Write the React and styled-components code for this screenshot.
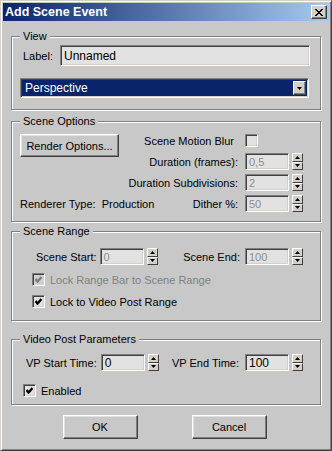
import React from 'react';
import styled, { createGlobalStyle } from 'styled-components';

const GlobalStyle = createGlobalStyle`
  * { box-sizing: border-box; }
  body {
    margin: 0;
    background: #c8c8c8;
    font-family: "Liberation Sans", Arial, sans-serif;
    font-size: 11px;
    color: #000;
  }
`;

const Window = styled.div`
  width: 332px;
  height: 451px;
  background: #c8c8c8;
  border: 1px solid;
  border-color: #d4d0c8 #404040 #404040 #d4d0c8;
  box-shadow: inset 1px 1px #fff, inset -1px -1px #808080;
  padding: 2px;
  display: flex;
  flex-direction: column;
`;

const TitleBar = styled.div`
  height: 18px;
  background: linear-gradient(to right, #0a246a, #a6caf0);
  display: flex;
  align-items: center;
  justify-content: space-between;
  padding: 0 2px 0 2px;
  color: #fff;
  font-weight: bold;
  font-size: 12.5px;
`;

const CloseBtn = styled.div`
  width: 16px;
  height: 14px;
  background: #d4d0c8;
  border: 1px solid;
  border-color: #fff #404040 #404040 #fff;
  box-shadow: inset -1px -1px #808080;
  display: flex;
  align-items: center;
  justify-content: center;
`;

const Body = styled.div`
  padding: 0 8px;
  display: flex;
  flex-direction: column;
`;

const Group = styled.div`
  position: relative;
  margin-top: ${p => p.$top}px;
  height: ${p => p.$h}px;
  border: 1px solid #808080;
  box-shadow: inset 1px 1px #fff, 1px 1px #fff;
  padding: ${p => p.$pad};
  display: flex;
  flex-direction: column;
`;

const Legend = styled.span`
  position: absolute;
  top: -7px;
  left: 8px;
  padding: 0 3px;
  background: #c8c8c8;
  line-height: 13px;
`;

const Row = styled.div`
  display: flex;
  align-items: center;
  justify-content: ${p => p.$justify || 'flex-start'};
  margin-top: ${p => p.$mt || 0}px;
  margin-left: ${p => p.$ml || 0}px;
  gap: ${p => p.$gap || 0}px;
  color: ${p => (p.$disabled ? '#808080' : '#000')};
`;

const Edit = styled.div`
  height: ${p => p.$h || 17}px;
  width: ${p => (p.$w ? p.$w + 'px' : 'auto')};
  flex: ${p => (p.$w ? 'none' : '1')};
  background: #e2e2e2;
  border: 1px solid;
  border-color: #808080 #fff #fff #808080;
  box-shadow: inset 1px 1px #404040, inset -1px -1px #d4d0c8;
  padding: 0 3px;
  display: flex;
  align-items: center;
  color: ${p => (p.$disabled ? '#8c8c8c' : '#000')};
  font-size: ${p => p.$fs || 11}px;
`;

const Combo = styled.div`
  margin: 12px 0 0 -3px;
  width: 289px;
  height: 20px;
  border: 1px solid;
  border-color: #808080 #fff #fff #808080;
  box-shadow: inset 1px 1px #404040, inset -1px -1px #d4d0c8;
  padding: 2px;
  display: flex;
  background: #0a246a;
`;

const ComboText = styled.div`
  flex: 1;
  color: #fff;
  font-size: 12px;
  display: flex;
  align-items: center;
  padding-left: 2px;
`;

const ArrowBtn = styled.div`
  width: 13px;
  height: 14px;
  background: #d4d0c8;
  border: 1px solid;
  border-color: #fff #404040 #404040 #fff;
  box-shadow: inset -1px -1px #808080;
  display: flex;
  align-items: center;
  justify-content: center;
`;

const Button = styled.div`
  width: ${p => p.$w}px;
  height: ${p => p.$h}px;
  background: #c8c8c8;
  border: 1px solid;
  border-color: #fff #404040 #404040 #fff;
  box-shadow: inset -1px -1px #808080, inset 1px 1px #e0e0e0;
  display: flex;
  align-items: center;
  justify-content: center;
  font-size: 11px;
`;

const OptionsGrid = styled.div`
  display: grid;
  grid-template-columns: minmax(0, 1fr) auto 58px;
  grid-template-rows: repeat(4, 17px);
  row-gap: 4px;
  column-gap: 7px;
  align-items: center;
`;

const GridLabel = styled.div`
  grid-column: 2;
  grid-row: ${p => p.$row};
  margin-right: ${p => p.$mr || 0}px;
  text-align: right;
  white-space: nowrap;
`;

const GridControl = styled.div`
  grid-column: 3;
  grid-row: ${p => p.$row};
  display: flex;
  align-items: center;
  gap: 3px;
`;

const RenderBtnCell = styled.div`
  grid-column: 1;
  grid-row: 1 / span 2;
  align-self: start;
  margin-top: 2px;
`;

const RendererCell = styled.div`
  grid-column: 1;
  grid-row: 4;
  white-space: pre;
`;

const Label = styled.span`
  white-space: pre;
`;

const Spinner = styled.div`
  width: 11px;
  height: 17px;
  display: flex;
  flex-direction: column;
`;

const SpinHalf = styled.div`
  flex: 1;
  background: #d4d0c8;
  border: 1px solid;
  border-color: #fff #404040 #404040 #fff;
  display: flex;
  align-items: center;
  justify-content: center;
`;

const Check = styled.div`
  width: 13px;
  height: 13px;
  background: ${p => (p.$disabled ? '#d0d0d0' : '#e2e2e2')};
  border: 1px solid;
  border-color: #808080 #fff #fff #808080;
  box-shadow: inset 1px 1px #404040, inset -1px -1px #d4d0c8;
  display: flex;
  align-items: center;
  justify-content: center;
`;

const Field = styled.div`
  display: flex;
  align-items: center;
  gap: ${p => p.$gap || 6}px;
`;

const SpinPair = styled.div`
  display: flex;
  align-items: center;
  gap: 3px;
`;

const Buttons = styled.div`
  display: flex;
  justify-content: center;
  gap: 54px;
  margin-top: 10px;
  padding-right: 3px;
`;

function Tri({ up }) {
  return (
    <svg width="5" height="3" viewBox="0 0 5 3">
      <polygon points={up ? '2.5,0 5,3 0,3' : '0,0 5,0 2.5,3'} fill="#000" />
    </svg>
  );
}

function Spin() {
  return (
    <Spinner>
      <SpinHalf><Tri up /></SpinHalf>
      <SpinHalf><Tri /></SpinHalf>
    </Spinner>
  );
}

function SpinEdit({ value, disabled, fs }) {
  return (
    <SpinPair>
      <Edit $w={44} $disabled={disabled} $fs={fs}>{value}</Edit>
      <Spin />
    </SpinPair>
  );
}

function CheckBox({ checked, disabled }) {
  return (
    <Check $disabled={disabled}>
      {checked && (
        <svg width="7" height="7" viewBox="0 0 7 7">
          <polyline
            points="0.5,3 2.5,5.5 6.5,1"
            fill="none"
            stroke={disabled ? '#808080' : '#000'}
            strokeWidth="2.4"
          />
        </svg>
      )}
    </Check>
  );
}

export default function App() {
  return (
    <>
      <GlobalStyle />
      <Window>
        <TitleBar>
          <span>Add Scene Event</span>
          <CloseBtn>
            <svg width="8" height="7" viewBox="0 0 8 7">
              <path d="M0 0 L7 7 M1 0 L8 7 M7 0 L0 7 M8 0 L1 7" stroke="#000" strokeWidth="1" />
            </svg>
          </CloseBtn>
        </TitleBar>
        <Body>
          <Group $top={15} $h={74} $pad="8px 10px 0 11px">
            <Legend>View</Legend>
            <Row $gap={7}>
              <Label>Label:</Label>
              <Edit $h={21} $fs={12}>Unnamed</Edit>
            </Row>
            <Combo>
              <ComboText>Perspective</ComboText>
              <ArrowBtn><Tri /></ArrowBtn>
            </Combo>
          </Group>

          <Group $top={11} $h={101} $pad="10px 17px 0 8px">
            <Legend>Scene Options</Legend>
            <OptionsGrid>
              <RenderBtnCell>
                <Button $w={99} $h={23}>Render Options...</Button>
              </RenderBtnCell>
              <GridLabel $row={1} $mr={4}>Scene Motion Blur</GridLabel>
              <GridControl $row={1}><CheckBox /></GridControl>
              <GridLabel $row={2}>Duration (frames):</GridLabel>
              <GridControl $row={2}><SpinEdit value="0,5" disabled /></GridControl>
              <GridLabel $row={3}>Duration Subdivisions:</GridLabel>
              <GridControl $row={3}><SpinEdit value="2" disabled /></GridControl>
              <RendererCell>Renderer Type:  Production</RendererCell>
              <GridLabel $row={4}>Dither %:</GridLabel>
              <GridControl $row={4}><SpinEdit value="50" disabled /></GridControl>
            </OptionsGrid>
          </Group>

          <Group $top={9} $h={90} $pad="16px 17px 0 24px">
            <Legend>Scene Range</Legend>
            <Row $justify="space-between">
              <Field $gap={3}>
                <Label>Scene Start:</Label>
                <SpinEdit value="0" disabled />
              </Field>
              <Field $gap={5}>
                <Label>Scene End:</Label>
                <SpinEdit value="100" disabled />
              </Field>
            </Row>
            <Row $mt={8} $ml={-4} $gap={5} $disabled>
              <CheckBox checked disabled />
              <Label>Lock Range Bar to Scene Range</Label>
            </Row>
            <Row $mt={9} $ml={-4} $gap={5}>
              <CheckBox checked />
              <Label>Lock to Video Post Range</Label>
            </Row>
          </Group>

          <Group $top={18} $h={66} $pad="14px 17px 0 14px">
            <Legend>Video Post Parameters</Legend>
            <Row $justify="space-between">
              <Field $gap={4}>
                <Label>VP Start Time:</Label>
                <SpinEdit value="0" fs={12} />
              </Field>
              <Field $gap={6}>
                <Label>VP End Time:</Label>
                <SpinEdit value="100" fs={12} />
              </Field>
            </Row>
            <Row $mt={13} $ml={-3} $gap={5}>
              <CheckBox checked />
              <Label>Enabled</Label>
            </Row>
          </Group>

          <Buttons>
            <Button $w={75} $h={24}>OK</Button>
            <Button $w={75} $h={24}>Cancel</Button>
          </Buttons>
        </Body>
      </Window>
    </>
  );
}
